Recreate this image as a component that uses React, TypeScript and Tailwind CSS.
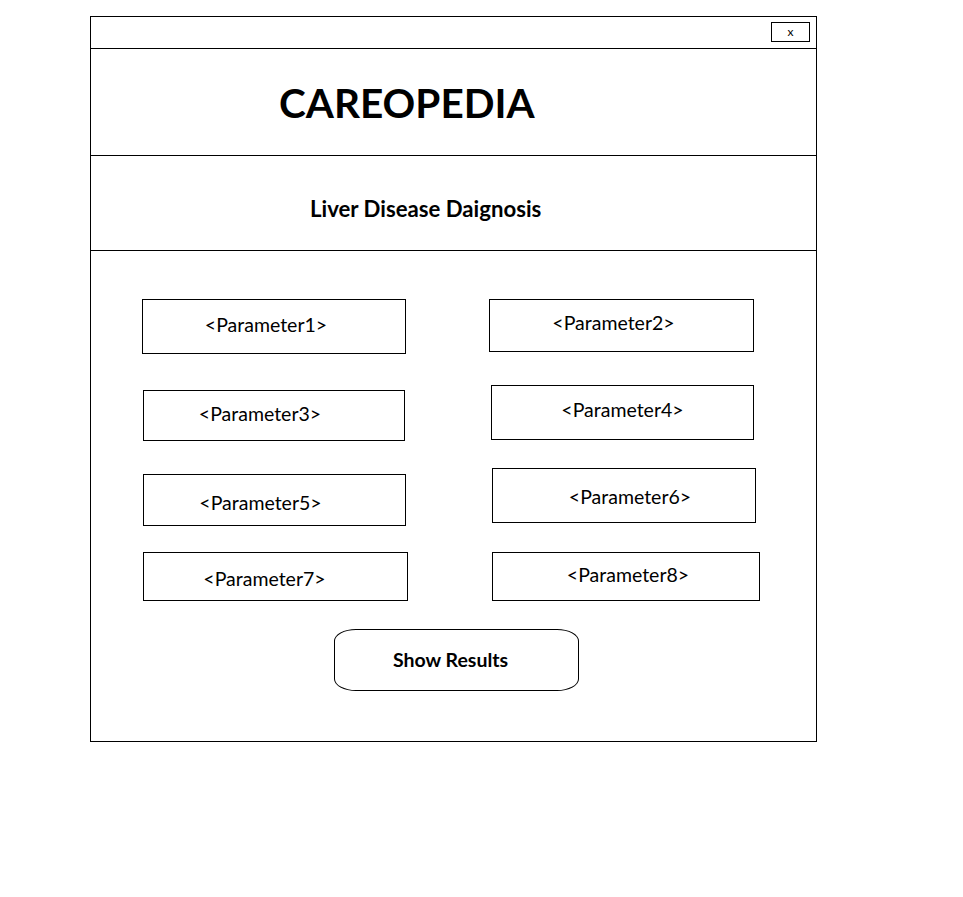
const font = { fontFamily: '"Lato", "Liberation Sans", sans-serif' };

type ParamProps = {
  label: string;
  box: string;
  text: string;
};

const Param = ({ label, box, text }: ParamProps) => (
  <div className={`border border-black flex items-center justify-center ${box}`}>
    <span className={`text-[19.5px] text-black leading-none ${text}`}>{label}</span>
  </div>
);

export default function App() {
  return (
    <div className="w-[963px] h-[897px] bg-white" style={font}>
      <div className="ml-[90px] pt-[16px]">
        <div className="w-[727px] h-[726px] border border-black flex flex-col">
          {/* top bar */}
          <div className="h-[32px] border-b border-black flex justify-end items-start">
            <button className="mt-[5px] mr-[6px] w-[39px] h-[20px] border border-black flex items-center justify-center text-[12px] leading-none text-black">
              x
            </button>
          </div>

          {/* header */}
          <div className="h-[107px] border-b border-black flex items-center">
            <h1 className="ml-[188px] mt-[3px] text-[40.5px] font-bold text-black leading-none">
              CAREOPEDIA
            </h1>
          </div>

          {/* subtitle */}
          <div className="h-[95px] border-b border-black flex items-center">
            <h2 className="ml-[219px] mt-[12px] text-[22.2px] font-bold text-black leading-none">
              Liver Disease Daignosis
            </h2>
          </div>

          {/* form */}
          <div className="flex-1 flex flex-col">
            <div className="mt-[48px] h-[55px] flex items-start">
              <Param label="<Parameter1>" box="ml-[51px] w-[264px] h-[55px]" text="mr-[16px] mt-[-4px]" />
              <Param label="<Parameter2>" box="ml-[83px] w-[265px] h-[53px]" text="mr-[16px] mt-[-5px]" />
            </div>
            <div className="mt-[31px] h-[56px] flex items-start">
              <Param label="<Parameter3>" box="ml-[52px] mt-[5px] w-[262px] h-[51px]" text="mr-[28px] mt-[-4px]" />
              <Param label="<Parameter4>" box="ml-[86px] w-[263px] h-[55px]" text="mt-[-6px]" />
            </div>
            <div className="mt-[27px] h-[58px] flex items-start">
              <Param label="<Parameter5>" box="ml-[52px] mt-[6px] w-[263px] h-[52px]" text="mr-[28px] mt-[5px]" />
              <Param label="<Parameter6>" box="ml-[86px] w-[264px] h-[55px]" text="ml-[12px] mt-[2px]" />
            </div>
            <div className="mt-[26px] h-[49px] flex items-start">
              <Param label="<Parameter7>" box="ml-[52px] w-[265px] h-[49px]" text="mr-[22px] mt-[5px]" />
              <Param label="<Parameter8>" box="ml-[84px] w-[268px] h-[49px]" text="ml-[4px] mt-[-3px]" />
            </div>

            <div className="mt-[28px] flex">
              <button className="ml-[243px] w-[245px] h-[62px] border border-black rounded-[22px/12px] flex items-center justify-center">
                <span className="mr-[12px] text-[19.5px] font-bold text-black leading-none">Show Results</span>
              </button>
            </div>
          </div>
        </div>
      </div>
    </div>
  );
}
